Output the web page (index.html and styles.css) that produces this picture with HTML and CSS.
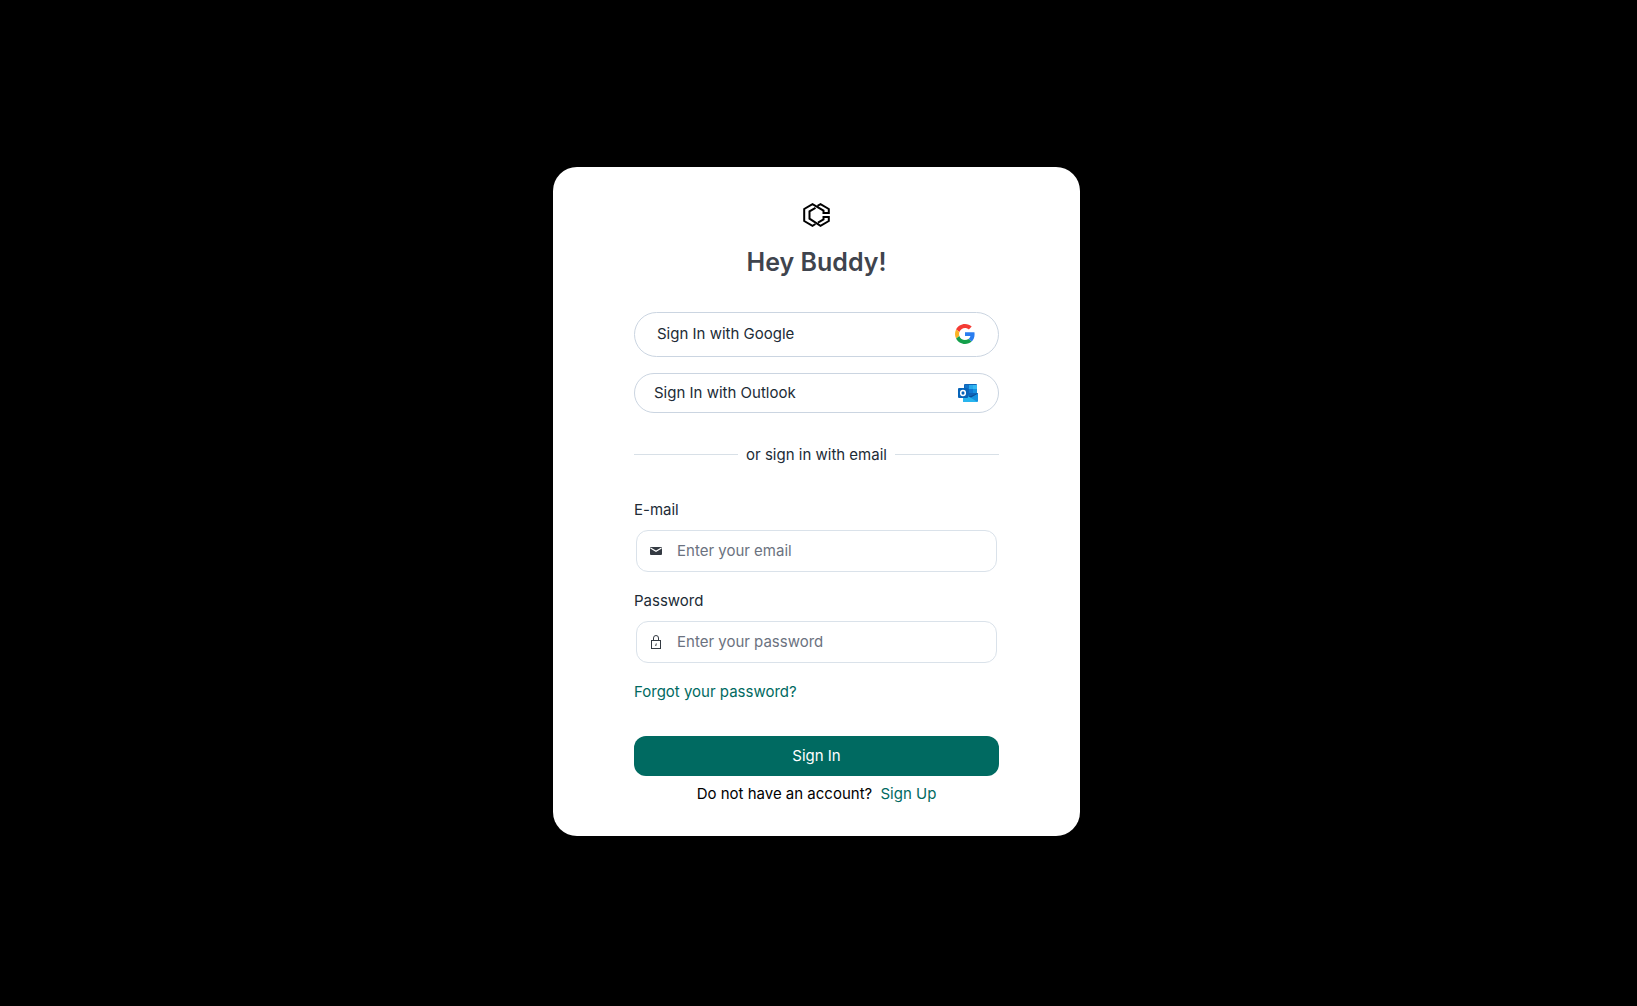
FILE: index.html
```
<!DOCTYPE html>
<html lang="en">
<head>
    <meta charset="UTF-8">
    <meta name="viewport" content="width=device-width, initial-scale=1.0">
    <title>Sign In</title>
    <link rel="stylesheet" href="styles.css">
</head>
<body>

    <main class="card">
        <!-- Logo -->
        <svg class="logo" viewBox="0 0 27 24" fill="none" stroke="#000" stroke-width="2" aria-hidden="true">
            <path d="M12.500 21 L9.500 22.800 L1.200 18 V6 L9.500 1.200 L20.500 7.600 V10 H25.800 V6 L17.500 1.200 L14.500 2.800"/>
            <path d="M12.500 4.800 L6.500 8.400 V15.600 L17.500 22.800 L25.800 18 V14 H20.500 V16.400 L15 19.600"/>
        </svg>

        <h1>Hey Buddy!</h1>

        <!-- Social sign in -->
        <div class="social">
            <button type="button" class="social-btn google">
                <span>Sign In with Google</span>
                <svg width="20" height="20" viewBox="0 0 48 48" aria-hidden="true">
                    <path fill="#f43b34" d="M24 9.5c3.5 0 6.7 1.2 9.2 3.6l6.9-6.9C35.9 2.4 30.5 0 24 0 14.6 0 6.5 5.4 2.6 13.2l8 6.2C12.5 13.7 17.7 9.5 24 9.5z"/>
                    <path fill="#2a7df0" d="M47 24.5c0-1.6-.2-3.1-.4-4.5H24v9h12.9c-.6 3-2.3 5.500-4.800 7.200l7.700 6C44.400 38 47 32 47 24.500z"/>
                    <path fill="#fbb324" d="M10.500 28.600c-.5-1.500-.8-3-.8-4.600s.3-3.100.8-4.600l-8-6.200C.9 16.500 0 20.100 0 24s.9 7.500 2.600 10.800l7.900-6.200z"/>
                    <path fill="#14a04b" d="M24 48c6.500 0 11.900-2.100 15.900-5.800l-7.700-6c-2.200 1.500-4.900 2.300-8.200 2.300-6.300 0-11.600-4.200-13.500-9.900l-7.900 6.200C6.500 42.600 14.600 48 24 48z"/>
                </svg>
            </button>
            <button type="button" class="social-btn outlook">
                <span>Sign In with Outlook</span>
                <svg width="20" height="18" viewBox="0 0 20 18" aria-hidden="true">
                    <rect x="6" y="0" width="13" height="13" rx="1" fill="#0f64b8"/>
                    <rect x="7" y="1" width="4" height="4" fill="#1374c8"/>
                    <rect x="11" y="1" width="4" height="4" fill="#28a8ea"/>
                    <rect x="15" y="1" width="4" height="4" fill="#35b8f1"/>
                    <rect x="11" y="5" width="4" height="4" fill="#0f78d4"/>
                    <rect x="15" y="5" width="4" height="4" fill="#1490df"/>
                    <path d="M5 9 L13 13 L20 9 V17 Q20 18 19 18 H6 Q5 18 5 17z" fill="#1490df"/>
                    <path d="M5 9 L19.500 18 H6 Q5 18 5 17z" fill="#28b5ee"/>
                    <path d="M10 12 L13 13.500 L20 9.500 V9 L13 12z" fill="#0a4c94"/>
                    <rect x="0" y="4" width="10" height="10" rx="1" fill="#0764b9"/>
                    <ellipse cx="5" cy="9" rx="2.300" ry="2.500" fill="none" stroke="#fff" stroke-width="1.500"/>
                </svg>
            </button>
        </div>

        <div class="divider">or sign in with email</div>

        <!-- Email form -->
        <form>
            <label for="email">E-mail</label>
            <div class="field">
                <svg width="12" height="14" viewBox="0 0 12 14" aria-hidden="true">
                    <rect x="0" y="3" width="12" height="8" rx="1" fill="#343a42"/>
                    <path d="M0.500 4 L6 7.300 L11.500 4" fill="none" stroke="#fff" stroke-width="1.200"/>
                </svg>
                <input type="email" id="email" placeholder="Enter your email">
            </div>

            <label for="password">Password</label>
            <div class="field">
                <svg width="12" height="14" viewBox="0 0 12 14" fill="none" stroke="#343a42" aria-hidden="true">
                    <rect x="1.500" y="5.500" width="9" height="8"/>
                    <path d="M3.500 5.500 V3 a2.500 2.500 0 0 1 5 0 V5.500"/>
                    <path d="M6.300 8.500 L5.700 11"/>
                </svg>
                <input type="password" id="password" placeholder="Enter your password">
            </div>

            <a class="forgot" href="#">Forgot your password?</a>

            <button type="submit" class="submit-btn">Sign In</button>
        </form>

        <p class="signup">Do not have an account? <a href="#">Sign Up</a></p>
    </main>

</body>
</html>
```
FILE: styles.css
```
* {
    box-sizing: border-box;
}

body {
    font-family: Inter, sans-serif;
    font-size: 15px;
    line-height: 24px;
    margin: 0;
    padding: 0 4px 4px 0;
    min-height: 100vh;
    display: flex;
    justify-content: center;
    align-items: center;
    background-color: #000;
    color: #212b36;
}

a {
    color: #006a61;
    text-decoration: none;
}

button,
input {
    font: inherit;
    color: inherit;
}

button {
    cursor: pointer;
}

.card {
    width: 100%;
    max-width: 527px;
    padding: 36px 81px 30px;
    background-color: #fff;
    border-radius: 24px;
}

.logo {
    display: block;
    width: 27px;
    height: 24px;
    margin: 0 auto 19px;
}

h1 {
    margin: 0 0 34px;
    font-size: 25px;
    line-height: 32px;
    font-weight: 600;
    text-align: center;
    color: #3f444d;
}

.social {
    display: flex;
    flex-direction: column;
    gap: 16px;
}

.social-btn {
    display: flex;
    justify-content: space-between;
    align-items: center;
    background-color: #fff;
    border: 1px solid #cbd5e1;
    border-radius: 24px;
}

.google {
    height: 45px;
    padding: 0 23px 0 22px;
}

.outlook {
    height: 40px;
    padding: 0 20px 0 19px;
}

.divider {
    display: flex;
    align-items: center;
    gap: 8px;
    margin: 30px 0 31px;
}

.divider::before,
.divider::after {
    content: "";
    flex: 1;
    height: 1px;
    background-color: #d8e0e7;
}

label {
    display: block;
    margin-bottom: 8px;
}

.field {
    display: flex;
    align-items: center;
    gap: 15px;
    height: 42px;
    margin: 0 2px 17px;
    padding: 0 13px;
    border: 1px solid #dae2ea;
    border-radius: 12px;
}

.field input {
    flex: 1;
    min-width: 0;
    padding: 0;
    border: none;
    outline: none;
    background: none;
}

.field input::placeholder {
    color: #6b7280;
    opacity: 1;
}

.forgot {
    display: block;
}

.submit-btn {
    width: 100%;
    height: 40px;
    margin: 32px 0 6px;
    background-color: #006a61;
    color: #fff;
    border: none;
    border-radius: 12px;
}

.signup {
    margin: 0;
    text-align: center;
    color: #000;
}

.signup a {
    margin-left: 4px;
}
```
